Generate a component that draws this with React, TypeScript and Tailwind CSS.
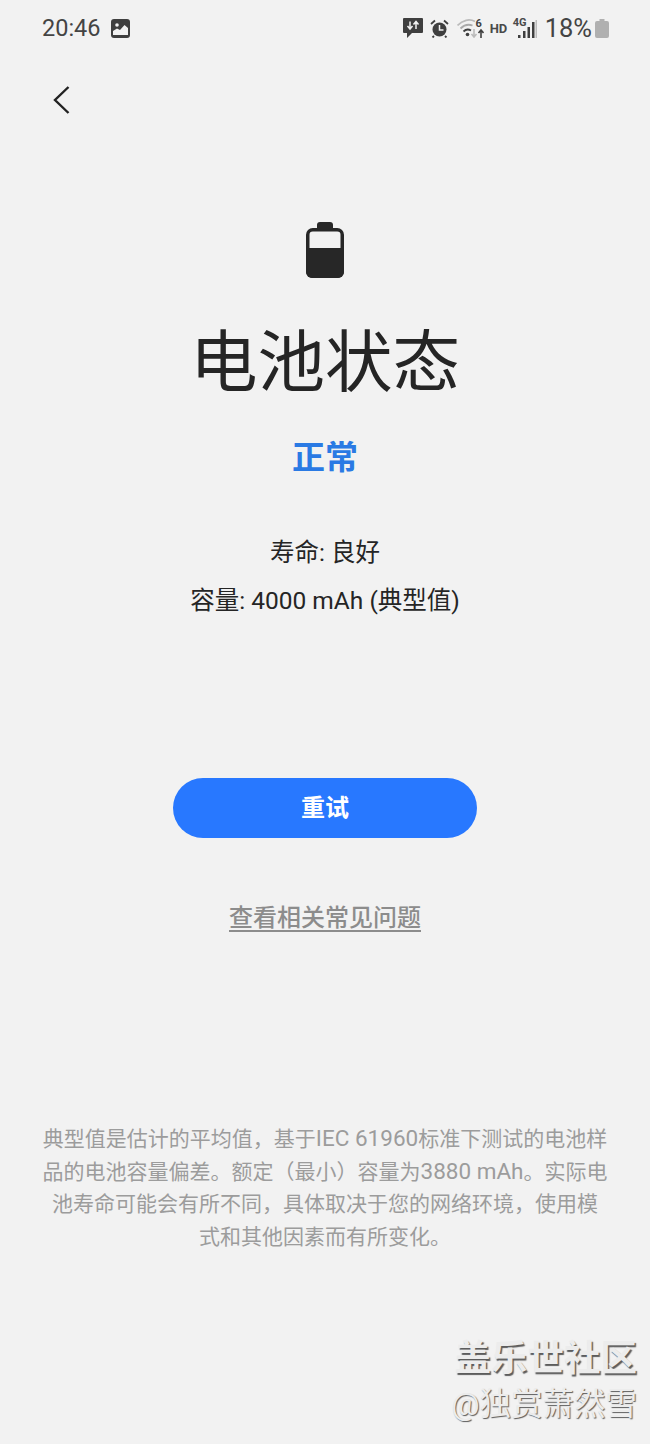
const cjk = "font-['Roboto','Noto_Sans_CJK_SC',sans-serif]"

// the device font sets latin wider than Roboto at the same size
function Latin({ children }: { children: string }) {
  return <span className="text-[22.5px]">{children}</span>
}

const notes = [
  <>典型值是估计的平均值，基于<Latin>IEC 61960</Latin>标准下测试的电池样</>,
  <>品的电池容量偏差。额定（最小）容量为<Latin>3880 mAh</Latin>。实际电</>,
  <>池寿命可能会有所不同，具体取决于您的网络环境，使用模</>,
  <>式和其他因素而有所变化。</>,
]

function StatusBar() {
  return (
    <div className="flex h-[56px] items-center justify-between pl-[42px] pr-[41px] text-[#444]">
      <div className="flex items-center gap-[10px]">
        <span className="mt-[2px] text-[23.5px] leading-none font-['Roboto',sans-serif]">20:46</span>
        {/* picture notification */}
        <svg width="19" height="19" viewBox="0 0 19 19">
          <rect width="19" height="19" rx="3" fill="#3f3f3f" />
          <circle cx="6" cy="6" r="1.8" fill="#f2f2f2" />
          <path d="M2 16v-4l4-2.500 3 1.500 4.500-5L17 9v7z" fill="#f2f2f2" />
        </svg>
      </div>
      <div className="flex items-center">
        {/* message with data arrows */}
        <svg width="20" height="20" viewBox="0 0 20 20" className="mr-[7px]">
          <path d="M1 0h18a1 1 0 0 1 1 1v13a1 1 0 0 1-1 1H9l-5 5v-5H1a1 1 0 0 1-1-1V1a1 1 0 0 1 1-1z" fill="#3f3f3f" />
          <path d="M7 3.500v7.500M4.500 8l2.500 3 2.500-3M13 11V3.500M10.500 6.500l2.500-3 2.500 3" stroke="#f2f2f2" strokeWidth="1.500" fill="none" />
        </svg>
        {/* alarm */}
        <svg width="19" height="19" viewBox="0 0 19 19" className="mr-[8px]">
          <circle cx="9.500" cy="10.500" r="7" fill="#3f3f3f" />
          <path d="M9.500 6v5h4" stroke="#f2f2f2" strokeWidth="1.500" fill="none" />
          <path d="M1 5l4-3.500M18 5l-4-3.500M4 17l-1.500 1.500M15 17l1.500 1.500" stroke="#3f3f3f" strokeWidth="1.800" fill="none" />
        </svg>
        {/* wifi */}
        <svg width="27" height="20" viewBox="0 0 27 20" className="mr-[6px]">
          <path d="M0.500 7.500C5.500 2 12.500 0.500 18 3.500" stroke="#bbb" strokeWidth="1.800" fill="none" />
          <path d="M3.500 10.500C7 7 11.500 6 15.500 7.500" stroke="#aaa" strokeWidth="1.800" fill="none" />
          <path d="M6.500 13.500C8.500 11.500 11.500 11 14 12.500" stroke="#3f3f3f" strokeWidth="1.800" fill="none" />
          <circle cx="10.500" cy="16.500" r="1.800" fill="#3f3f3f" />
          <text x="18.500" y="9" fontSize="11" fontWeight="700" fill="#3f3f3f" fontFamily="Roboto, sans-serif">6</text>
          <path d="M17 11v8M14.500 16l2.500 3 2.500-3" stroke="#bbb" strokeWidth="1.600" fill="none" />
          <path d="M24 20v-8M21.500 15l2.500-3 2.500 3" stroke="#3f3f3f" strokeWidth="1.600" fill="none" />
        </svg>
        <span className="mr-[7px] w-[16px] text-[13px] leading-none font-bold font-['Roboto',sans-serif] text-[#4a4a4a]">HD</span>
        {/* 4G signal */}
        <div className="relative mr-[8px] h-[22px] w-[24px]">
          <span className="absolute top-[0px] left-0 text-[11px] leading-none font-bold font-['Roboto',sans-serif] text-[#4a4a4a]">4G</span>
          <svg width="24" height="22" viewBox="0 0 24 22" className="absolute inset-0">
            <rect x="5" y="18" width="2.500" height="3" fill="#3f3f3f" />
            <rect x="10" y="14" width="2.500" height="7" fill="#3f3f3f" />
            <rect x="14.500" y="10" width="2.500" height="11" fill="#3f3f3f" />
            <rect x="19" y="5" width="2.500" height="16" fill="#3f3f3f" />
            <rect x="22.500" y="3" width="1.500" height="18" fill="#bdbdbd" />
          </svg>
        </div>
        <span className="mt-[2px] mr-[3px] text-[25.500px] leading-none font-['Roboto',sans-serif]">18%</span>
        <svg width="14" height="19" viewBox="0 0 14 19">
          <path d="M4.500 0h5v2h2.500a2 2 0 0 1 2 2v13a2 2 0 0 1-2 2H2a2 2 0 0 1-2-2V4a2 2 0 0 1 2-2h2.500z" fill="#b0b0b0" />
        </svg>
      </div>
    </div>
  )
}

export default function App() {
  return (
    <div className={`relative flex h-[1444px] w-[650px] flex-col overflow-hidden bg-[#f2f2f2] ${cjk}`}>
      <StatusBar />

      {/* Back */}
      <div className="mt-[29px] pl-[53px]">
        <svg width="17" height="30" viewBox="0 0 17 30" fill="none">
          <path d="M15.500 2L2 15l13.500 13" stroke="#222" strokeWidth="2.400" />
        </svg>
      </div>

      {/* Battery summary */}
      <div className="mt-[107px] flex flex-col items-center">
        <svg width="38" height="56" viewBox="0 0 38 56">
          <path d="M14 0h10a3 3 0 0 1 3 3v4H11V3a3 3 0 0 1 3-3z" fill="#272727" />
          <rect x="1.750" y="7.750" width="34.500" height="46.500" rx="5" fill="#f2f2f2" stroke="#272727" strokeWidth="3.500" />
          <path d="M0 26h38v24a6 6 0 0 1-6 6H6a6 6 0 0 1-6-6z" fill="#272727" />
        </svg>
        <h1 className="mt-[41px] text-[67.500px] leading-[88px] font-normal text-[#252525]">电池状态</h1>
        <div className="mt-[29px] text-[33px] leading-[44px] font-bold text-[#2a7ae4]">正常</div>
        <div className="mt-[57px] text-[24.500px] leading-[32px] text-[#252525]">寿命: 良好</div>
        <div className="mt-[16px] text-[24.500px] leading-[32px] text-[#252525]">容量: 4000 mAh (典型值)</div>
      </div>

      {/* Actions */}
      <div className="mt-[161px] flex flex-col items-center">
        <button className="flex h-[60px] w-[304px] items-center justify-center rounded-full bg-[#2878ff] text-[24px] font-bold text-white">
          重试
        </button>
        <a className="mt-[64px] text-[24px] leading-[32px] font-medium text-[#8c8c8c] underline underline-offset-4">
          查看相关常见问题
        </a>
      </div>

      {/* Footnote */}
      <div className="mt-[188px] flex flex-col items-center text-[21px] leading-[33px] text-[#9c9c9c]">
        {notes.map((line, index) => (
          <div key={index} className="h-[33px] whitespace-nowrap">{line}</div>
        ))}
      </div>

      {/* Watermark */}
      <div className="absolute top-[1336px] right-[13px] flex flex-col items-end text-[#ececec]">
        <div className="text-[36.500px] leading-[46px] font-bold [text-shadow:1.500px_1.500px_1px_#5c5c5c]">盖乐世社区</div>
        <div className="mt-[3px] text-[31.500px] leading-[40px] [text-shadow:1px_1px_1px_#5c5c5c]">@独赏萧然雪</div>
      </div>
    </div>
  )
}
